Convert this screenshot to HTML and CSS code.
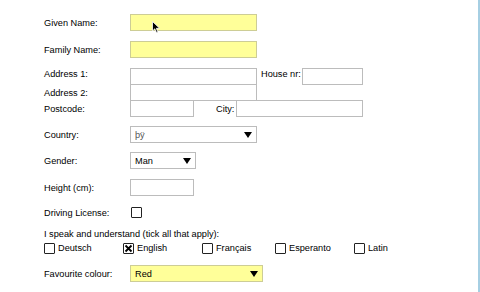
FILE: index.html
```html
<!DOCTYPE html>
<html lang="en">
<head>
    <meta charset="UTF-8">
    <meta name="viewport" content="width=device-width, initial-scale=1.0">
    <title>Personal details</title>
    <link rel="stylesheet" href="styles.css">
</head>
<body>
    <div class="page">
        <form class="form">
            <div class="row r-given">
                <label class="lbl">Given Name:</label>
                <span class="wrap">
                    <input class="txt req w-long" type="text">
                    <!-- mouse pointer -->
                    <svg class="pointer" width="9" height="13" viewBox="0 0 9 13">
                        <path d="M0.5 0.5 L0.5 10 L2.8 7.8 L4.6 11.8 L6 11.2 L4.3 7.3 L7.6 7.3 Z" fill="#000" stroke="#fff" stroke-width="0.8"/>
                    </svg>
                </span>
            </div>
            <div class="row r-family">
                <label class="lbl">Family Name:</label>
                <input class="txt req w-long" type="text">
            </div>
            <div class="row r-addr1">
                <label class="lbl lbl-top">Address 1:</label>
                <input class="txt w-long" type="text">
                <label class="lbl-inline house">House nr:</label>
                <input class="txt w-house" type="text">
            </div>
            <div class="row r-addr2">
                <label class="lbl">Address 2:</label>
                <input class="txt w-long" type="text">
            </div>
            <div class="row r-post">
                <label class="lbl">Postcode:</label>
                <input class="txt w-short" type="text">
                <label class="lbl-inline city">City:</label>
                <input class="txt w-long" type="text">
            </div>
            <div class="row r-country">
                <label class="lbl">Country:</label>
                <span class="sel w-long">
                    <select class="dim"><option>þÿ</option></select>
                </span>
            </div>
            <div class="row r-gender">
                <label class="lbl">Gender:</label>
                <span class="sel w-gender">
                    <select><option>Man</option><option>Woman</option></select>
                </span>
            </div>
            <div class="row r-height">
                <label class="lbl">Height (cm):</label>
                <input class="txt w-short" type="text">
            </div>
            <div class="row r-drive">
                <label class="lbl">Driving License:</label>
                <span class="check drive-box"></span>
            </div>
            <div class="row r-speak">I speak and understand (tick all that apply):</div>
            <div class="row r-langs">
                <label class="lang w-de"><span class="check"></span>Deutsch</label>
                <label class="lang w-en"><span class="check checked">
                    <svg width="9" height="9" viewBox="0 0 9 9"><path d="M1.5 1.5 L7.5 7.5 M7.5 1.5 L1.5 7.5" stroke="#000" stroke-width="1.8"/></svg>
                </span>English</label>
                <label class="lang w-fr"><span class="check"></span>Français</label>
                <label class="lang w-eo"><span class="check"></span>Esperanto</label>
                <label class="lang"><span class="check"></span>Latin</label>
            </div>
            <div class="row r-fav">
                <label class="lbl">Favourite colour:</label>
                <span class="sel req w-fav">
                    <select><option>Red</option><option>Green</option><option>Blue</option></select>
                </span>
            </div>
        </form>
    </div>
</body>
</html>
```

FILE: styles.css
```css
body {
    margin: 0;
    font-family: "Liberation Sans", Arial, sans-serif;
    font-size: 9.2px;
    color: #000;
    background-color: #fff;
}
.page {
    width: 478px;
    height: 292px;
    border-right: 2px solid #a6cfe3;
    overflow: hidden;
}
.form {
    padding: 14px 0 0 44px;
}
.row {
    display: flex;
    align-items: center;
    height: 17px;
}
.lbl {
    width: 86px;
    flex: none;
}
.lbl-top {
    align-self: flex-start;
    padding-top: 1px;
}
.lbl-inline {
    flex: none;
}
.house {
    margin: 0 1px 0 4px;
    align-self: flex-start;
    padding-top: 1px;
}
.city {
    margin: 0 2px 0 22px;
}
.wrap {
    position: relative;
    display: flex;
}
.pointer {
    position: absolute;
    left: 22px;
    top: 7px;
}
.txt {
    box-sizing: border-box;
    height: 17px;
    margin: 0;
    padding: 0 4px;
    border: 1px solid #bcbcbc;
    background-color: #fff;
    font: inherit;
    flex: none;
}
.req,
.txt.req {
    background-color: #ffff99;
    border-color: #cdcd96;
}
.w-long {
    width: 127px;
}
.w-house {
    width: 61px;
}
.w-short {
    width: 64px;
}
.w-gender {
    width: 66px;
}
.w-fav {
    width: 133px;
}
.sel {
    position: relative;
    box-sizing: border-box;
    height: 17px;
    border: 1px solid #bcbcbc;
    flex: none;
}
.sel.req {
    border-color: #cdcd96;
}
.sel select {
    appearance: none;
    -webkit-appearance: none;
    width: 100%;
    height: 100%;
    margin: 0;
    padding: 0 4px;
    border: none;
    background: transparent;
    font: inherit;
    color: #000;
    outline: none;
}
.sel select.dim {
    color: #555;
}
.sel::after {
    content: "";
    position: absolute;
    right: 4px;
    top: 5px;
    border-left: 4px solid transparent;
    border-right: 4px solid transparent;
    border-top: 6px solid #000;
    pointer-events: none;
}
.r-family { margin-top: 10px; }
.r-addr1 { margin-top: 10px; }
.r-addr2 { margin-top: -1px; }
.r-post { margin-top: -1px; }
.r-country { margin-top: 9px; }
.r-gender { margin-top: 9px; }
.r-height { margin-top: 10px; }
.r-drive { margin-top: 8px; }
.r-speak {
    margin-top: 7px;
    height: 12px;
}
.r-langs {
    margin-top: 2px;
    height: 12px;
}
.r-fav { margin-top: 11px; }
.check {
    box-sizing: border-box;
    display: inline-flex;
    align-items: center;
    justify-content: center;
    width: 11px;
    height: 11px;
    border: 1px solid #222;
    border-radius: 1px;
    background-color: #fff;
    flex: none;
}
.drive-box {
    margin-left: 1px;
}
.lang {
    display: flex;
    align-items: center;
    flex: none;
}
.lang .check {
    margin-right: 3px;
}
.w-de { width: 79px; }
.w-en { width: 79px; }
.w-fr { width: 73px; }
.w-eo { width: 79px; }
```
